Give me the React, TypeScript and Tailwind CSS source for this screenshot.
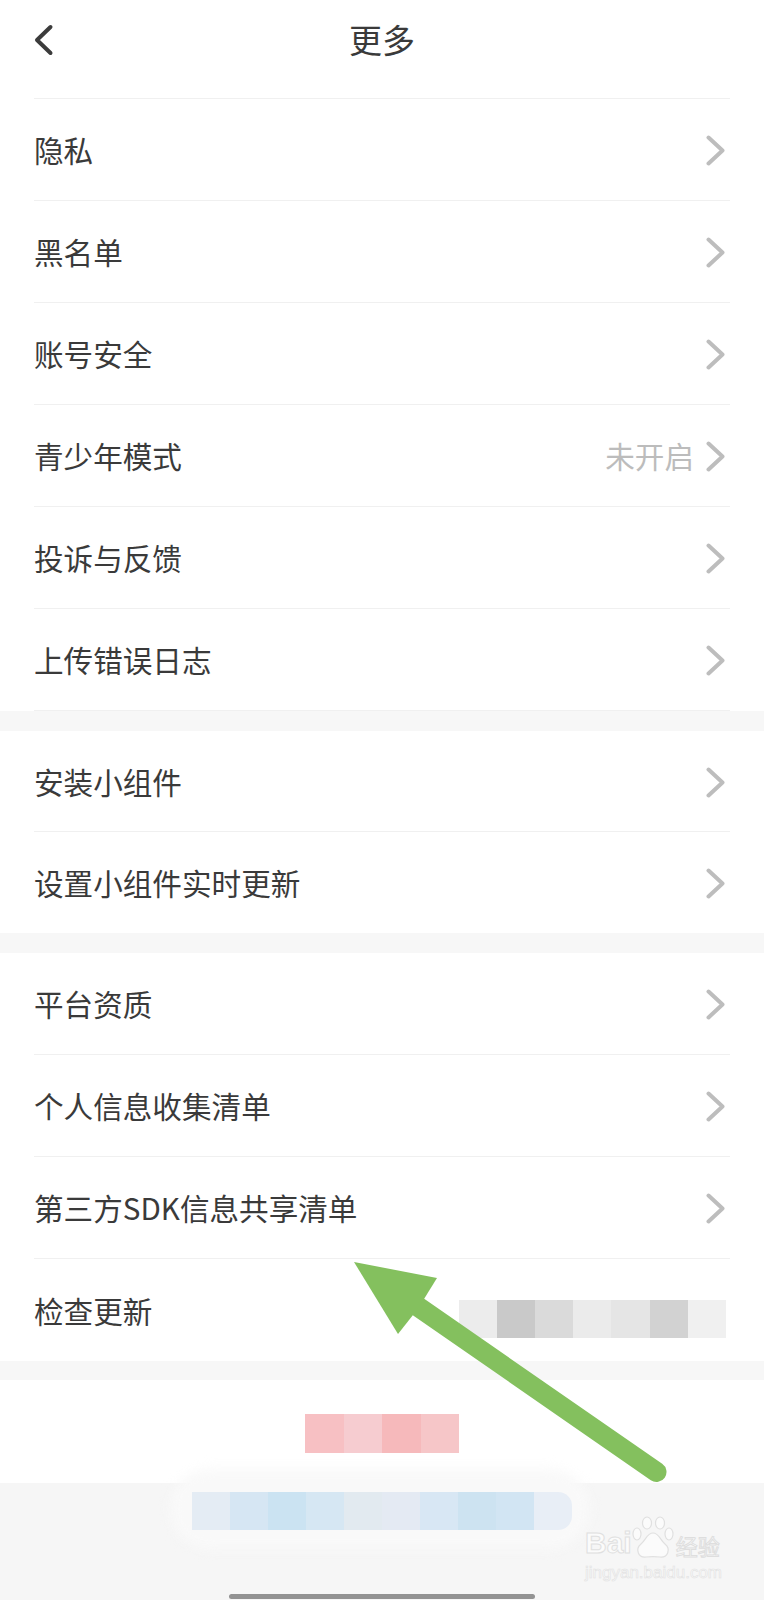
const font = { fontFamily: '"Noto Sans CJK SC", "Liberation Sans", sans-serif' };

const groupOne = [
  { label: "隐私" },
  { label: "黑名单" },
  { label: "账号安全" },
  { label: "青少年模式", value: "未开启" },
  { label: "投诉与反馈" },
  { label: "上传错误日志" },
];
const groupTwo = [{ label: "安装小组件" }, { label: "设置小组件实时更新" }];
const groupThree = [
  { label: "平台资质" },
  { label: "个人信息收集清单" },
  { label: "第三方SDK信息共享清单" },
];

const greyCells = ["bg-[#ececec]", "bg-[#c9c9c9]", "bg-[#dadada]", "bg-[#ebebeb]", "bg-[#e5e5e5]", "bg-[#d2d2d2]", "bg-[#f0f0f0]"];
const redCells = ["bg-[#f7c0c3]", "bg-[#f6ccd0]", "bg-[#f6b9bb]", "bg-[#f6c6c8]"];
const blueCells = [
  "bg-[#e4ecf4]",
  "bg-[#d6e6f3]",
  "bg-[#cbe3f2]",
  "bg-[#d6e7f3]",
  "bg-[#e2eaf0]",
  "bg-[#e4eaf3]",
  "bg-[#d8e7f4]",
  "bg-[#cde3f1]",
  "bg-[#d2e5f3]",
  "bg-[#e8eef6] rounded-r-[14px]",
];

function Chevron() {
  return (
    <svg width="19" height="31" viewBox="0 0 19 31" fill="none" className="shrink-0">
      <path d="M2.5 2.5 L16.5 15.5 L2.5 28.5" stroke="#bdbdbd" strokeWidth="4" strokeLinecap="round" strokeLinejoin="round" />
    </svg>
  );
}

function Row({ label, value, last, short }: { label: string; value?: string; last?: boolean; short?: boolean }) {
  return (
    <div
      className={`flex items-center justify-between pt-[2px] pr-[5px] ${short ? "h-[101px]" : "h-[102px]"} ${
        last ? "" : "border-b border-[#f0f0f0]"
      }`}
    >
      <span className="text-[29.6px] text-[#3a3a3a]">{label}</span>
      <div className="flex items-center gap-[12px]">
        {value && <span className="text-[29.6px] text-[#bcbcbc]">{value}</span>}
        <Chevron />
      </div>
    </div>
  );
}

function Paw() {
  return (
    <svg width="42" height="44" viewBox="0 0 42 44" fill="#fbfbfb" stroke="#e0e0e0" strokeWidth="1.2">
      <ellipse cx="5" cy="18" rx="4" ry="6" />
      <ellipse cx="15" cy="7" rx="4.5" ry="6" />
      <ellipse cx="28" cy="7" rx="4.5" ry="6" />
      <ellipse cx="37" cy="18" rx="4" ry="6" />
      <path d="M21 17 C27 17 28 24 33 28 C39 33 36 42 28 41 C24 40.500 18 40.500 14 41 C6 42 3 33 9 28 C14 24 15 17 21 17 Z" />
    </svg>
  );
}

export default function App() {
  return (
    <div className="relative flex h-[1600px] w-[764px] flex-col overflow-hidden bg-white" style={font}>
      <header className="relative mx-[34px] flex h-[99px] shrink-0 items-center justify-center border-b border-[#f0f0f0] pb-[19px]">
        <svg width="20" height="32" viewBox="0 0 20 32" fill="none" className="absolute top-[24px] left-0">
          <path d="M16.500 3 L3 16 L16.500 29" stroke="#3c3c3c" strokeWidth="4" strokeLinecap="round" strokeLinejoin="round" />
        </svg>
        <h1 className="text-[33px] font-normal text-[#3a3a3a]">更多</h1>
      </header>

      <section className="mx-[34px]">
        {groupOne.map((row) => (
          <Row key={row.label} {...row} />
        ))}
      </section>
      <div className="h-[20px] shrink-0 bg-[#f7f7f7]" />

      <section className="mx-[34px]">
        {groupTwo.map((row, i) => (
          <Row key={row.label} {...row} short last={i === groupTwo.length - 1} />
        ))}
      </section>
      <div className="h-[20px] shrink-0 bg-[#f7f7f7]" />

      <section className="mx-[34px]">
        {groupThree.map((row) => (
          <Row key={row.label} {...row} />
        ))}
        <div className="flex h-[102px] items-center justify-between pt-[2px] pr-[4px]">
          <span className="text-[29.6px] text-[#3a3a3a]">检查更新</span>
          <div className="mt-[16px] flex">
            {greyCells.map((c, i) => (
              <div key={i} className={`h-[38px] w-[38.200px] ${c}`} />
            ))}
          </div>
        </div>
      </section>
      <div className="h-[19px] shrink-0 bg-[#f7f7f7]" />

      <div className="flex h-[103px] shrink-0 items-center justify-center pt-[3px]">
        {redCells.map((c, i) => (
          <div key={i} className={`h-[39px] w-[38.500px] ${c}`} />
        ))}
      </div>

      <footer className="relative flex flex-1 flex-col items-center bg-[#f6f6f6] pt-[9px]">
        <div className="absolute top-[-14px] left-[170px] h-[80px] w-[420px] rounded-[40px] bg-[#f9f9f9] blur-[6px]" />
        <div className="relative flex">
          {blueCells.map((c, i) => (
            <div key={i} className={`h-[38px] w-[38.100px] ${c}`} />
          ))}
        </div>
        <div className="relative mt-[64px] h-[5px] w-[306px] rounded-full bg-[#939393]" />
      </footer>

      {/* watermark */}
      <div className="pointer-events-none absolute top-[1516px] left-[585px] w-[140px]">
        <div className="flex items-end">
          <span className="text-[30px] leading-[34px] font-bold text-[#fbfbfb] [-webkit-text-stroke:1px_#e0e0e0] [font-family:'Liberation_Sans']">Bai</span>
          <Paw />
          <span className="ml-[2px] text-[22px] leading-[30px] text-[#fbfbfb] [-webkit-text-stroke:1px_#dedede]">经验</span>
        </div>
        <div className="mt-[3px] text-[17px] leading-[20px] text-[#fafafa] [-webkit-text-stroke:0.6px_#e2e2e2] [font-family:'Liberation_Sans']">jingyan.baidu.com</div>
      </div>

      {/* annotation arrow */}
      <svg width="764" height="1600" viewBox="0 0 764 1600" className="pointer-events-none absolute top-0 left-0">
        <path d="M418.500 1307 L656.500 1472" stroke="#84c05e" strokeWidth="20" strokeLinecap="round" fill="none" />
        <path d="M354 1262 L437 1278 L424 1299 L413 1315 L398 1334 Z" fill="#84c05e" />
      </svg>
    </div>
  );
}
